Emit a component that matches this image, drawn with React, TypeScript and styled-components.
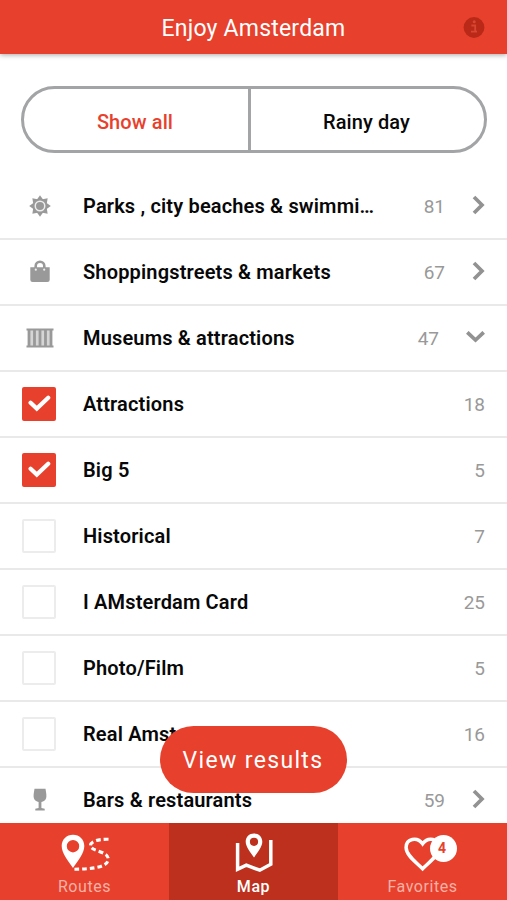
import React from "react";
import styled, { createGlobalStyle } from "styled-components";

const RED = "#e7412d";
const GREY = "#999";

const Global = createGlobalStyle`
  * { box-sizing: border-box; }
  html, body { margin: 0; background: #fff; }
  body { font-family: Roboto, sans-serif; color: #080808; overflow: hidden; }
  button { font: inherit; color: inherit; border: 0; background: none; padding: 0; }
`;
const Screen = styled.div`
  width: 507px;
  height: 900px;
  display: flex;
  flex-direction: column;
  overflow: hidden;
  position: relative;
`;
const Header = styled.header`
  height: 54px;
  flex: none;
  padding: 0 22px;
  background: ${RED};
  color: #fff;
  display: grid;
  grid-template-columns: 22px 1fr 22px;
  align-items: center;
  box-shadow: 0 1px 5px rgba(0, 0, 0, 0.35);
`;
const Title = styled.h1`
  margin: 3px 0 0;
  text-align: center;
  font-size: 23px;
  line-height: 30px;
  font-weight: 400;
  letter-spacing: 0.2px;
`;
const Segments = styled.div`
  flex: none;
  margin: 32px 20px 20.5px 21px;
  height: 67px;
  border: 3px solid #a3a4a6;
  border-radius: 34px;
  display: flex;
`;
const Segment = styled.button<{ $active?: boolean }>`
  flex: ${(p) => (p.$active ? "0 0 227px" : "1")};
  border-right: ${(p) => (p.$active ? "3px solid #a3a4a6" : "0")};
  color: ${(p) => (p.$active ? RED : "#080808")};
  font-size: 20px;
  font-weight: 500;
  letter-spacing: 0.1px;
  padding: 4px 2px 0 0;
`;
const List = styled.main`
  flex: 1;
  min-height: 0;
  overflow: hidden;
`;
const Row = styled.div`
  height: 66.05px;
  padding: 0 22px;
  border-bottom: 2px solid #e9e9e9;
  display: flex;
  align-items: center;
`;
const Lead = styled.div`
  width: 35px;
  margin-right: 26px;
  display: flex;
  justify-content: center;
`;
const Label = styled.span`
  flex: none;
  width: 294px;
  font-size: 20px;
  line-height: 26px;
  font-weight: 600;
  letter-spacing: 0.16px;
  white-space: nowrap;
  overflow: hidden;
  text-overflow: ellipsis;
`;
const Count = styled.span`
  margin-left: auto;
  padding-top: 1px;
  font-size: 19px;
  color: ${GREY};
`;
const Arrow = styled.svg`
  margin-left: 27px;
  display: block;
  fill: none;
  stroke: #929292;
  stroke-width: 3.7;
`;
const Check = styled.div<{ $on: boolean }>`
  width: 34px;
  height: 34px;
  border-radius: 2px;
  margin: 1px 1px 0 0;
  border: ${(p) => (p.$on ? "0" : "2px solid #ececec")};
  background: ${(p) => (p.$on ? RED : "#fff")};
  display: flex;
  align-items: center;
  justify-content: center;
`;
const ViewResults = styled.button`
  position: absolute;
  left: 160px;
  bottom: 107px;
  width: 187px;
  height: 67px;
  border-radius: 34px;
  background: ${RED};
  color: #fff;
  font-size: 23px;
  letter-spacing: 1.35px;
  padding: 2px 1px 0 0;
`;
const Nav = styled.nav`
  flex: none;
  height: 77px;
  display: grid;
  grid-template-columns: repeat(3, 1fr);
  background: ${RED};
`;
const Tab = styled.button<{ $active?: boolean }>`
  display: flex;
  flex-direction: column;
  align-items: center;
  padding-top: 10px;
  background: ${(p) => (p.$active ? "#bd301e" : RED)};
  color: ${(p) => (p.$active ? "#fff" : "#f7b0a5")};
  font-size: 16px;
  font-weight: ${(p) => (p.$active ? 500 : 400)};
  letter-spacing: 0.55px;
  line-height: 22px;
`;
const TabIcon = styled.div`
  position: relative;
  width: 60px;
  height: 43px;
  color: #fff;
`;
const Badge = styled.span`
  position: absolute;
  left: 37px;
  top: 2px;
  width: 27px;
  height: 27px;
  border-radius: 50%;
  background: #fff;
  color: ${RED};
  font-size: 14px;
  line-height: 26px;
  font-weight: 700;
  letter-spacing: 0;
  text-align: center;
  padding-right: 2px;
`;

const InfoIcon = () => (
  <svg width="22" height="22" viewBox="0 0 22 22">
    <circle cx="11" cy="11.5" r="10.4" fill="#ba2917" />
    <path d="M8.4 9.5h3.8v6M8 15.7h6" fill="none" stroke="#d84633" strokeWidth="1.8" />
    <circle cx="11.2" cy="5.7" r="1.5" fill="#d84633" />
  </svg>
);

const SunIcon = () => (
  <svg width="22" height="22" viewBox="-11 -11 22 22" fill={GREY}>
    {[0, 45, 90, 135, 180, 225, 270, 315].map((a) => (
      <path key={a} transform={`rotate(${a})`} d="M-3 -6.6L0 -10.8L3 -6.6Z" />
    ))}
    <circle r="6.5" fill="#eee" stroke={GREY} strokeWidth="2" />
    <circle r="4" />
  </svg>
);

const BagIcon = () => (
  <svg width="20" height="23" viewBox="0 0 20 23">
    <path d="M.3 7.2h19.4v12.5q0 2.3-2.3 2.3H2.6Q.3 22 .3 19.7Z" fill={GREY} />
    <path d="M5.7 8V6a4.3 4.3 0 0 1 8.6 0v2" fill="none" stroke={GREY} strokeWidth="2.6" />
    <circle cx="5.8" cy="9.7" r="1.1" fill="#eee" />
    <circle cx="14.2" cy="9.7" r="1.1" fill="#eee" />
  </svg>
);

const MuseumIcon = () => (
  <svg width="28" height="20" viewBox="0 0 28 20">
    <path d="M2 2h24v16H2z" fill="#d5d5d5" />
    <path d="M.5 1.4h27M.5 18.6h27" stroke={GREY} strokeWidth="2" />
    <path d="M3 2v16M8.5 2v16M14 2v16M19.5 2v16M25 2v16" stroke={GREY} strokeWidth="2.8" />
  </svg>
);

const GlassIcon = () => (
  <svg width="14" height="23" viewBox="0 0 14 23" fill={GREY}>
    <path d="M1.5 .7h11c.7 4 1.3 7.5.6 9.6-.7 2-2.6 3.4-4.7 3.7V20l3.3.8v1.7H2.3v-1.7l3.3-.8v-6C3.5 13.7 1.6 12.3.9 10.3.2 8.2.8 4.7 1.5 .7Z" />
  </svg>
);

const CheckMark = () => (
  <svg width="24" height="18" viewBox="0 0 24 18" fill="none" stroke="#fff" strokeWidth="4.2">
    <path d="M3.6 7.7L9.8 13.6L21.2 2.7" strokeLinecap="round" strokeLinejoin="miter" />
  </svg>
);

const RoutesIcon = () => (
  <svg width="60" height="40" viewBox="0 0 60 40">
    <path fill="#fff" fillRule="evenodd" d="M18 1.7C11.6 1.7 6.7 6.5 6.7 12.9C6.7 20.5 13 27.3 18 35C23 27.3 29.3 20.5 29.3 12.9C29.3 6.5 24.4 1.7 18 1.7ZM18 7a6.2 6.2 0 1 1 0 12.4a6.2 6.2 0 1 1 0-12.4Z" />
    <path d="M53.5 6.3C43 6 35.5 8.5 35.5 12.5C35.5 18.5 53.4 18 53.2 26C53 33.5 41 36.2 17 36.2" fill="none" stroke="#fff" strokeWidth="3.1" strokeDasharray="4.7 3" />
  </svg>
);

const MapIcon = () => (
  <svg width="60" height="40" viewBox="0 0 60 40">
    <path d="M13.6 10V36.3L22.3 32.2L35.8 37.2L46.8 31.3V7" fill="none" stroke="#fff" strokeWidth="3.5" />
    <path fill="#fff" fillRule="evenodd" d="M30 .6C25.2 .6 21.7 4.1 21.7 8.8C21.7 13.8 26.3 19.2 30 24.5C33.7 19.2 38.3 13.8 38.3 8.8C38.3 4.1 34.8 .6 30 .6ZM30 4.7a4.1 4.1 0 1 1 0 8.2a4.1 4.1 0 1 1 0-8.2Z" />
  </svg>
);

const HeartIcon = () => (
  <svg width="60" height="40" viewBox="0 0 60 40">
    <path d="M29.6 35.8C23.6 29.7 13.1 22.5 13.1 14.5C13.1 5.6 24.1 3.2 29.6 10.8C35.1 3.2 46.1 5.6 46.1 14.5C46.1 22.5 35.6 29.7 29.6 35.8Z" fill="none" stroke="#fff" strokeWidth="3.5" />
  </svg>
);

type Item = { label: string; count: number; icon?: React.ReactNode; open?: boolean; checked?: boolean };

const items: Item[] = [
  { label: "Parks , city beaches & swimmi…", count: 81, icon: <SunIcon /> },
  { label: "Shoppingstreets & markets", count: 67, icon: <BagIcon /> },
  { label: "Museums & attractions", count: 47, icon: <MuseumIcon />, open: true },
  { label: "Attractions", count: 18, checked: true },
  { label: "Big 5", count: 5, checked: true },
  { label: "Historical", count: 7 },
  { label: "I AMsterdam Card", count: 25 },
  { label: "Photo/Film", count: 5 },
  { label: "Real Amsterdam", count: 16 },
  { label: "Bars & restaurants", count: 59, icon: <GlassIcon /> },
];

const Chevron = ({ open }: { open?: boolean }) =>
  open ? (
    <Arrow width="19" height="13" viewBox="0 0 19 13">
      <path d="M1.3 1.3L9.5 9L17.7 1.3" />
    </Arrow>
  ) : (
    <Arrow width="13" height="22" viewBox="0 0 13 22">
      <path d="M2 2L10 10L2 18" />
    </Arrow>
  );

export default function App() {
  return (
    <Screen>
      <Global />
      <Header>
        <span />
        <Title>Enjoy Amsterdam</Title>
        <InfoIcon />
      </Header>
      <Segments>
        <Segment $active>Show all</Segment>
        <Segment>Rainy day</Segment>
      </Segments>
      <List>
        {items.map((item) => (
          <Row key={item.label}>
            <Lead>{item.icon ?? <Check $on={!!item.checked}>{item.checked && <CheckMark />}</Check>}</Lead>
            <Label>{item.label}</Label>
            <Count>{item.count}</Count>
            {item.icon && <Chevron open={item.open} />}
          </Row>
        ))}
      </List>
      <ViewResults>View results</ViewResults>
      <Nav>
        <Tab>
          <TabIcon><RoutesIcon /></TabIcon>
          Routes
        </Tab>
        <Tab $active>
          <TabIcon><MapIcon /></TabIcon>
          Map
        </Tab>
        <Tab>
          <TabIcon><HeartIcon /><Badge>4</Badge></TabIcon>
          Favorites
        </Tab>
      </Nav>
    </Screen>
  );
}
